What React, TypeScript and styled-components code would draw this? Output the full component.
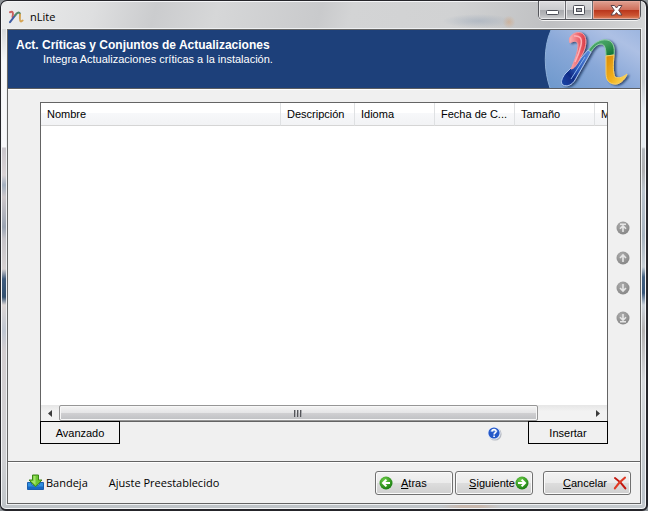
import React from "react";
import styled, { createGlobalStyle } from "styled-components";

const ms = `"Liberation Sans", Arial, sans-serif`;
const segoe = `"Open Sans", "Noto Sans", sans-serif`;

const Global = createGlobalStyle`
  *, *::before, *::after { box-sizing: border-box; }
  html, body, #root { height: 100%; }
  body { margin: 0; background: #8d9296; overflow: hidden; }
  button { margin: 0; padding: 0; font: inherit; color: inherit; cursor: default; }
  svg { display: block; flex: none; }
`;

const Window = styled.div`
  position: relative;
  display: flex;
  flex-direction: column;
  height: 100%;
  min-height: 400px;
  padding: 0 5px 5px 6px;
  border: 1px solid #25252a;
  border-width: 1px 2px 2px 1px;
  border-radius: 7px 7px 6px 6px;
  box-shadow: inset 0 0 0 1px #f4f5f7;
  color: #000;
  font: 11px/14px ${ms};
  background:
    linear-gradient(90deg, #bfc4c8 0, #bfc4c8 440px, #c8b8ae 460px, #c8b8ae 480px, #c4c9cd 500px) bottom / 100% 6px no-repeat,
    linear-gradient(180deg, #d8dadb 28px, #f6f7f8 60px, #f8f8fa 146px, #c9c5cb 147px, #d9d3d5 174px, #a4b0c0 184px, #cdc7ca 196px, #9aa3b2 226px, #c5c3c8 238px, #d6d1d2 268px, #3f5b7d 278px, #33506f 296px, #ddd6d5 304px, #bfc6d1 330px, #d3ced0 350px, #cfd0d3 460px, #bfc4c8 100%) left / 50% 100% no-repeat,
    linear-gradient(180deg, #d5d6d8 28px, #c7cbd0 80px, #e6ecf1 110px, #e6ecf1 146px, #b4b9be 148px, #b0b0b2 170px, #bcc5ce 190px, #a8b4c0 235px, #c8d0d6 266px, #426081 276px, #38567a 292px, #ccd3db 304px, #b4b2b2 330px, #d7dadd 380px, #bcc3c9 100%) right / 50% 100% no-repeat;
`;

const TitleBar = styled.header`
  display: flex;
  align-items: center;
  gap: 6px;
  height: 27px;
  margin: 1px -4px 0 -5px;
  padding: 3px 6px 0;
  border-radius: 5px 5px 0 0;
  background:
    radial-gradient(ellipse at center, #98a6b880, transparent 70%) 440px 12px / 72px 14px no-repeat,
    radial-gradient(circle at center, #d8a07080, transparent 70%) 500px 14px / 14px 12px no-repeat,
    linear-gradient(105deg, #eceded 0, #dedfe0 90px, #cbccce 150px, #d6d7d8 210px, #c9cacc 310px, #d3d4d5 340px, #d1d2d3 70%, #bfc0c2 85%, #d5d6d7 100%);
`;

const TitleText = styled.h1`
  margin: 0;
  font: 11px/16px ${segoe};
`;

const CaptionGroup = styled.div`
  position: absolute;
  top: 0;
  right: 5px;
  display: flex;
  height: 19px;
  border: 1px solid #55565b;
  border-top: 0;
  border-radius: 0 0 5px 5px;
  overflow: hidden;
  box-shadow: 0 1px 0 #f3f3f3;
`;

const CaptionButton = styled.button<{ $close?: boolean }>`
  display: flex;
  align-items: center;
  justify-content: center;
  width: ${(p) => (p.$close ? 47 : 27)}px;
  border: 0;
  border-right: ${(p) => (p.$close ? "0" : "1px solid #6a6b70")};
  box-shadow: inset 0 0 0 1px ${(p) => (p.$close ? "#e5a79a" : "#e8e8ea")};
  background: ${(p) =>
    p.$close
      ? "linear-gradient(180deg, #dfa192 0, #cf6f5b 48%, #b8341a 50%, #cc5433 80%, #dc8a62 100%)"
      : "linear-gradient(180deg, #dcdcde 0, #cacbce 48%, #a9aaae 50%, #b5b6b9 75%, #d0d1d3 100%)"};
`;

const Client = styled.main`
  display: flex;
  flex-direction: column;
  flex: 1;
  min-height: 0;
  border: 1px solid #646464;
  background: #f0f0f0;
  box-shadow: 0 0 0 1px #eef0f2;
`;

const Banner = styled.section`
  display: flex;
  justify-content: space-between;
  height: 59px;
  flex: none;
  border-bottom: 1px solid #5c5e62;
  background: #1d407a;
  color: #fff;
`;

const BannerText = styled.div`
  padding: 8px 0 0 8px;
`;

const BannerTitle = styled.h2`
  margin: 0;
  font: bold 12px/14px ${ms};
`;

const BannerNote = styled.p`
  margin: 0 0 0 27px;
  line-height: 14px;
`;

const Body = styled.section`
  display: flex;
  flex: 1;
  min-height: 0;
  padding: 12px 0 17px 32px;
  border-top: 1px solid #fff;
`;

const ListColumn = styled.div`
  display: flex;
  flex-direction: column;
  flex: 1;
  min-width: 0;
`;

const ListBox = styled.div`
  display: flex;
  flex-direction: column;
  justify-content: space-between;
  flex: 1;
  min-height: 0;
  border: 1px solid #646464;
  border-bottom: 0;
  background: #fff;
  overflow: hidden;
`;

const Table = styled.table`
  width: 634px;
  flex: none;
  table-layout: fixed;
  border-collapse: separate;
  border-spacing: 0;
`;

const HeadCell = styled.th<{ $width: number }>`
  width: ${(p) => p.$width}px;
  height: 23px;
  padding: 0 6px;
  border-right: 1px solid #dfe1e3;
  border-bottom: 1px solid #d5d5d5;
  background: linear-gradient(180deg, #fff 0, #fff 45%, #f7f8fa 46%, #f2f3f5 100%);
  font-weight: normal;
  text-align: left;
  white-space: nowrap;
  overflow: hidden;
`;

const ScrollBar = styled.div`
  display: flex;
  height: 16px;
  flex: none;
  background: linear-gradient(180deg, #e6e6e6, #f2f2f2 40%);
`;

const ScrollArrow = styled.button`
  display: flex;
  align-items: center;
  justify-content: center;
  width: 18px;
  border: 0;
  background: none;
`;

const ScrollTrack = styled.div`
  display: grid;
  grid-template-columns: 479fr 51fr;
  flex: 1;
`;

const ScrollThumb = styled.div`
  display: flex;
  align-items: center;
  justify-content: center;
  border: 1px solid #969696;
  border-radius: 2px;
  box-shadow: inset 0 0 0 1px #f7f7f7;
  background: linear-gradient(180deg, #f4f4f4 0, #e5e5e6 48%, #d0d0d2 50%, #bfc0c3 100%);
`;

const ListActions = styled.div`
  display: flex;
  align-items: center;
  height: 23px;
  flex: none;
  background: linear-gradient(#646464, #646464) top / 100% 1px no-repeat;
`;

const FlatButton = styled.button`
  width: 80px;
  height: 23px;
  border: 1px solid #000;
  background: #f0f0f0;
`;

const HelpButton = styled.button`
  margin: 1px 26px 0 auto;
  border: 0;
  background: none;
`;

const OrderColumn = styled.div`
  display: flex;
  flex-direction: column;
  align-items: center;
  justify-content: center;
  gap: 16px;
  width: 32px;
  padding: 0 2px 0 0;
`;

const OrderButton = styled.button`
  border: 0;
  background: none;
`;

const Footer = styled.footer`
  display: flex;
  align-items: center;
  height: 42px;
  flex: none;
  padding: 0 9px 0 19px;
  border-top: 1px solid #646464;
  box-shadow: inset 0 1px 0 #fff;
`;

const LinkButton = styled.button`
  display: flex;
  align-items: center;
  gap: 2px;
  margin-right: 21px;
  border: 0;
  background: none;
  font: 11px/16px ${segoe};
  white-space: nowrap;
`;

const Navigation = styled.nav`
  display: flex;
  gap: 2px;
  margin-left: auto;
`;

const NavButton = styled.button<{ $wide?: boolean }>`
  display: flex;
  align-items: center;
  justify-content: ${(p) => (p.$wide ? "flex-end" : "space-between")};
  gap: ${(p) => (p.$wide ? 6 : 0)}px;
  width: ${(p) => (p.$wide ? 88 : 78)}px;
  height: 24px;
  margin-left: ${(p) => (p.$wide ? 8 : 0)}px;
  padding: 0 3px;
  border: 1px solid #707070;
  border-radius: 3px;
  box-shadow: inset 0 0 0 1px #fbfbfb;
  background: linear-gradient(180deg, #f2f2f2 0, #ebebeb 49%, #dddddd 50%, #cfcfcf 100%);
`;

const NavLabel = styled.span<{ $grow?: boolean }>`
  flex: ${(p) => (p.$grow ? "1" : "none")};
  padding-left: ${(p) => (p.$grow ? 8 : 0)}px;
  text-align: left;
`;

const PushedLabel = styled(NavLabel)`
  margin-left: auto;
`;

const columns = [
  { label: "Nombre", width: 240 },
  { label: "Descripción", width: 74 },
  { label: "Idioma", width: 80 },
  { label: "Fecha de C...", width: 80 },
  { label: "Tamaño", width: 80 },
  { label: "M", width: 80 },
];

const AppIcon = () => (
  <svg width="16" height="16" viewBox="0 0 16 16" fill="none" strokeLinecap="round" strokeWidth="2">
    <path d="M2 3.2C5 2 5.5 4 4.5 8" stroke="#c9605f" />
    <path d="M2 13.2 7.5 6" stroke="#3e5ca3" />
    <path d="M7 6.5C9 3.5 11.5 2.5 12 5" stroke="#52886a" />
    <path d="M12 5.5C11.8 9 11.6 12.5 13 12.6L14.6 11.5" stroke="#d5a453" />
  </svg>
);

const LogoArt = () => (
  <svg width="97" height="58" viewBox="0 0 97 58" aria-label="nLite" role="img">
    <defs>
      <linearGradient id="disc" x1="0" y1="1" x2="1" y2="0">
        <stop offset="0" stopColor="#6d98cc" />
        <stop offset=".45" stopColor="#89a8d8" />
        <stop offset=".8" stopColor="#adc0e4" />
        <stop offset="1" stopColor="#9db6e0" />
      </linearGradient>
      <linearGradient id="red" x1="0" y1="0" x2="1" y2="0">
        <stop offset="0" stopColor="#f7b3b5" />
        <stop offset=".55" stopColor="#ee6870" />
        <stop offset="1" stopColor="#d93b45" />
      </linearGradient>
      <linearGradient id="blue" x1="1" y1="0" x2="0" y2="1">
        <stop offset="0" stopColor="#5d8edb" />
        <stop offset=".5" stopColor="#2c59ba" />
        <stop offset=".7" stopColor="#102c86" />
        <stop offset="1" stopColor="#1b46a8" />
      </linearGradient>
      <linearGradient id="green" x1="0" y1="0" x2="1" y2="1">
        <stop offset="0" stopColor="#4fae79" />
        <stop offset=".5" stopColor="#3f9b5a" />
        <stop offset="1" stopColor="#086d2d" />
      </linearGradient>
      <linearGradient id="gold" x1="0" y1="0" x2="1" y2="1">
        <stop offset="0" stopColor="#d98b09" />
        <stop offset=".55" stopColor="#f2b01c" />
        <stop offset="1" stopColor="#ffe36a" />
      </linearGradient>
      <filter id="shade" x="-20%" y="-20%" width="140%" height="140%">
        <feDropShadow dx="2" dy="1" stdDeviation="1.2" floodColor="#14264f" floodOpacity=".75" />
      </filter>
    </defs>
    <path d="M8 0C0 18 1 41 7 58H97V0Z" fill="url(#disc)" />
    <path d="M8 0C0 18 1 41 7 58" fill="none" stroke="#8fb0d8" strokeWidth="1" />
    <g transform="translate(1 1)">
      <g filter="url(#shade)" strokeWidth="1" strokeLinejoin="round">
        <path d="M44 20C49 12 56 8 63 9C69 10 71 16 70 24L62 25C62 18 61 13 57 13C52 13 49 18 46 22Z" fill="url(#green)" stroke="#8fd0a4" />
        <path d="M62 25L70 24C69 34 69 42 71 46C75 48 79 46 83 43C81 49 75 54 70 53C63 52 62 47 62 41Z" fill="url(#gold)" stroke="#f6cf68" />
        <path d="M27 37C30 36 34 32 37 27L44 19L47 21L31 49C28 54 23 56 19 54C16 52 18 47 21 43Z" fill="url(#blue)" stroke="#a9c4ee" />
        <path d="M27 5C30 1 37 0 40 4C43 8 42 16 39 22L33 33C31 36 29 38 27 38C30 31 34 21 34 14C34 10 30 9 26 12C25 9 25 7 27 5Z" fill="url(#red)" stroke="#f39aa0" />
      </g>
      <path d="M30 5Q39 4 37 14Q35 23 31 31" fill="none" stroke="#ffb0b4" strokeWidth="1.5" />
      <path d="M41 26 27 48" fill="none" stroke="#8bb5ee" strokeWidth="1" />
    </g>
  </svg>
);

const Ball = ({ id, light, dark }: { id: string; light: string; dark: string }) => (
  <>
    <radialGradient id={id} cx=".4" cy=".3" r=".75">
      <stop offset="0" stopColor={light} />
      <stop offset="1" stopColor={dark} />
    </radialGradient>
    <circle cx="7" cy="7" r="6.5" fill={`url(#${id})`} />
  </>
);

const arrowPaths: Record<string, string> = {
  top: "M4 3.2H10M7 11V5M4 7.8 7 4.8 10 7.8",
  up: "M7 11V4M4 7 7 4 10 7",
  down: "M7 3V10M4 7 7 10 10 7",
  bottom: "M4 10.8H10M7 3V9M4 6.2 7 9.2 10 6.2",
};

const OrderIcon = ({ kind }: { kind: string }) => (
  <svg width="14" height="14" viewBox="0 0 14 14">
    <Ball id={`ball-${kind}`} light="#acacac" dark="#858585" />
    <path d={arrowPaths[kind]} fill="none" stroke="#e6e6e6" strokeWidth="1.6" />
  </svg>
);

const GreenArrow = ({ kind }: { kind: "left" | "right" }) => (
  <svg width="14" height="14" viewBox="0 0 14 14">
    <Ball id={`green-${kind}`} light="#6fd04a" dark="#13770c" />
    <path
      d={kind === "left" ? "M11 7H4.5M7.4 3.6 4 7 7.4 10.4" : "M3 7H9.5M6.6 3.6 10 7 6.6 10.4"}
      fill="none"
      stroke="#fff"
      strokeWidth="2"
    />
  </svg>
);

const HelpIcon = () => (
  <svg width="15" height="15" viewBox="0 0 15 15">
    <circle cx="8" cy="8" r="6.6" fill="#b4b8c0" />
    <circle cx="7" cy="7" r="6.6" fill="#e9effb" />
    <circle cx="7" cy="7" r="5.6" fill="#2458c8" />
    <path d="M2.5 5.5A5 5 0 0 1 11.5 5.5Q7 7 2.5 5.5Z" fill="#6f9bea" opacity=".6" />
    <path d="M5 5.4C5 3 9.2 3 9.1 5.4C9 6.9 7.1 6.8 7.1 8.4M7.1 9.6V11" fill="none" stroke="#fff" strokeWidth="1.6" />
  </svg>
);

const TrayIcon = () => (
  <svg width="17" height="17" viewBox="0 0 17 17">
    <path d="M.5 8.5H4L5 11H12L13 8.5H16.5V15.5H.5Z" fill="#2f8fe0" stroke="#1a5fae" />
    <path d="M1 12.5H16V15H1Z" fill="#1768c4" />
    <path d="M5.5 1H11.5V6H15L8.5 12.8 2 6H5.5Z" fill="#6cc832" stroke="#3a8517" />
    <path d="M6.5 2H8.5V11L4 7H6.5Z" fill="#a4e36c" />
  </svg>
);

const CrossIcon = () => (
  <svg width="14" height="14" viewBox="0 0 14 14" fill="none" strokeLinecap="round">
    <path d="M2 2Q8 6 12.4 12.4" stroke="#c3170e" strokeWidth="2" />
    <path d="M12 1.6Q6 6 1.8 12.4" stroke="#e03a24" strokeWidth="2" />
  </svg>
);

const MinimizeIcon = () => (
  <svg width="13" height="13" viewBox="0 0 13 13">
    <rect x=".5" y="6.5" width="12" height="4" rx="1" fill="#fff" stroke="#4d4f58" />
  </svg>
);

const MaximizeIcon = () => (
  <svg width="12" height="11" viewBox="0 0 12 11">
    <rect x=".5" y=".5" width="11" height="9" rx="1" fill="#fff" stroke="#4d4f58" />
    <rect x="3.5" y="3.5" width="5" height="3" fill="#aaabb0" stroke="#4d4f58" />
  </svg>
);

const CloseIcon = () => (
  <svg width="13" height="11" viewBox="0 0 13 11">
    <path d="M1 .5H4.5L6.5 3 8.5 .5H12L8.7 5.2 12 10H8.5L6.5 7.6 4.5 10H1L4.3 5.2Z" fill="#fff" stroke="#5c4348" />
  </svg>
);

const order = [
  { kind: "top", label: "Mover al principio" },
  { kind: "up", label: "Subir" },
  { kind: "down", label: "Bajar" },
  { kind: "bottom", label: "Mover al final" },
];

export default function App() {
  return (
    <>
      <Global />
      <Window>
        <TitleBar>
          <AppIcon />
          <TitleText>nLite</TitleText>
          <CaptionGroup>
            <CaptionButton aria-label="Minimizar"><MinimizeIcon /></CaptionButton>
            <CaptionButton aria-label="Maximizar"><MaximizeIcon /></CaptionButton>
            <CaptionButton $close aria-label="Cerrar"><CloseIcon /></CaptionButton>
          </CaptionGroup>
        </TitleBar>
        <Client>
          <Banner>
            <BannerText>
              <BannerTitle>Act. Críticas y Conjuntos de Actualizaciones</BannerTitle>
              <BannerNote>Integra Actualizaciones críticas a la instalación.</BannerNote>
            </BannerText>
            <LogoArt />
          </Banner>
          <Body>
            <ListColumn>
              <ListBox>
                <Table>
                  <thead>
                    <tr>
                      {columns.map((c) => (
                        <HeadCell key={c.label} $width={c.width} scope="col">{c.label}</HeadCell>
                      ))}
                    </tr>
                  </thead>
                </Table>
                <ScrollBar>
                  <ScrollArrow aria-label="Desplazar a la izquierda">
                    <svg width="4" height="7" viewBox="0 0 4 7"><path d="M4 0V7L0 3.5Z" fill="#3c3c3c" /></svg>
                  </ScrollArrow>
                  <ScrollTrack>
                    <ScrollThumb>
                      <svg width="9" height="7" viewBox="0 0 9 7"><path d="M.5 0V7M3.5 0V7M6.5 0V7" stroke="#55565a" /><path d="M1.5 0V7M4.5 0V7M7.5 0V7" stroke="#aaabae" /></svg>
                    </ScrollThumb>
                  </ScrollTrack>
                  <ScrollArrow aria-label="Desplazar a la derecha">
                    <svg width="4" height="7" viewBox="0 0 4 7"><path d="M0 0V7L4 3.5Z" fill="#3c3c3c" /></svg>
                  </ScrollArrow>
                </ScrollBar>
              </ListBox>
              <ListActions>
                <FlatButton>Avanzado</FlatButton>
                <HelpButton aria-label="Ayuda"><HelpIcon /></HelpButton>
                <FlatButton>Insertar</FlatButton>
              </ListActions>
            </ListColumn>
            <OrderColumn>
              {order.map((o) => (
                <OrderButton key={o.kind} aria-label={o.label}><OrderIcon kind={o.kind} /></OrderButton>
              ))}
            </OrderColumn>
          </Body>
          <Footer>
            <LinkButton><TrayIcon />Bandeja</LinkButton>
            <LinkButton>Ajuste Preestablecido</LinkButton>
            <Navigation>
              <NavButton><GreenArrow kind="left" /><NavLabel $grow><u>A</u>tras</NavLabel></NavButton>
              <NavButton><PushedLabel><u>S</u>iguiente</PushedLabel><GreenArrow kind="right" /></NavButton>
              <NavButton $wide><NavLabel><u>C</u>ancelar</NavLabel><CrossIcon /></NavButton>
            </Navigation>
          </Footer>
        </Client>
      </Window>
    </>
  );
}
